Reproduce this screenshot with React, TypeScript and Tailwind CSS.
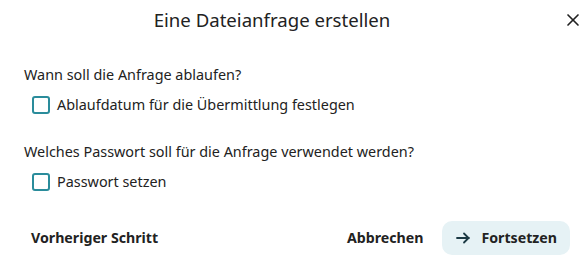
import { X } from "lucide-react";

function Check({ label }: { label: string }) {
  return (
    <label className="flex items-center gap-[7px] pl-[8px] h-[28px] mt-[4px] cursor-pointer">
      <span className="w-[18px] h-[18px] rounded-[3px] border-2 border-[#2a8c9b] bg-white shrink-0" />
      <span>{label}</span>
    </label>
  );
}

export default function App() {
  return (
    <div
      className="w-[588px] h-[265px] bg-white text-[#222222] relative"
      style={{ fontFamily: '"Noto Sans", sans-serif' }}
    >
      {/* Header */}
      <div className="h-[38px] flex items-center justify-center pr-[44px] pt-[1px]">
        <h2 className="text-[18.6px] font-normal">Eine Dateianfrage erstellen</h2>
      </div>
      <button className="absolute top-[8px] right-[3px] w-[24px] h-[24px] flex items-center justify-center text-[#222]">
        <X size={20} strokeWidth={2} />
      </button>

      {/* Body */}
      <div className="px-[24px] pt-[25px] text-[14.4px]">
        <p className="h-[24px] leading-[24px]">Wann soll die Anfrage ablaufen?</p>
        <Check label="Ablaufdatum für die Übermittlung festlegen" />
        <p className="h-[24px] leading-[24px] mt-[21px]">
          Welches Passwort soll für die Anfrage verwendet werden?
        </p>
        <Check label="Passwort setzen" />
      </div>

      {/* Footer */}
      <div className="flex items-center justify-between pl-[16px] pr-[18px] mt-[25px] text-[14.2px] font-bold">
        <button className="h-[34px] px-[15px] rounded-[10px]">Vorheriger Schritt</button>
        <div className="flex items-center gap-[4px]">
          <button className="h-[34px] px-[15px] rounded-[10px]">Abbrechen</button>
          <button className="h-[34px] pl-[14px] pr-[13px] rounded-[10px] bg-[#e6f2f5] flex items-center gap-[11px]">
            <svg width="14" height="12" viewBox="0 0 14 12" fill="none" stroke="#1c3a44" strokeWidth="1.8" strokeLinecap="round" strokeLinejoin="round">
              <path d="M1 6h12M8 1.5l4.5 4.5L8 10.5" />
            </svg>
            <span>Fortsetzen</span>
          </button>
        </div>
      </div>
    </div>
  );
}
